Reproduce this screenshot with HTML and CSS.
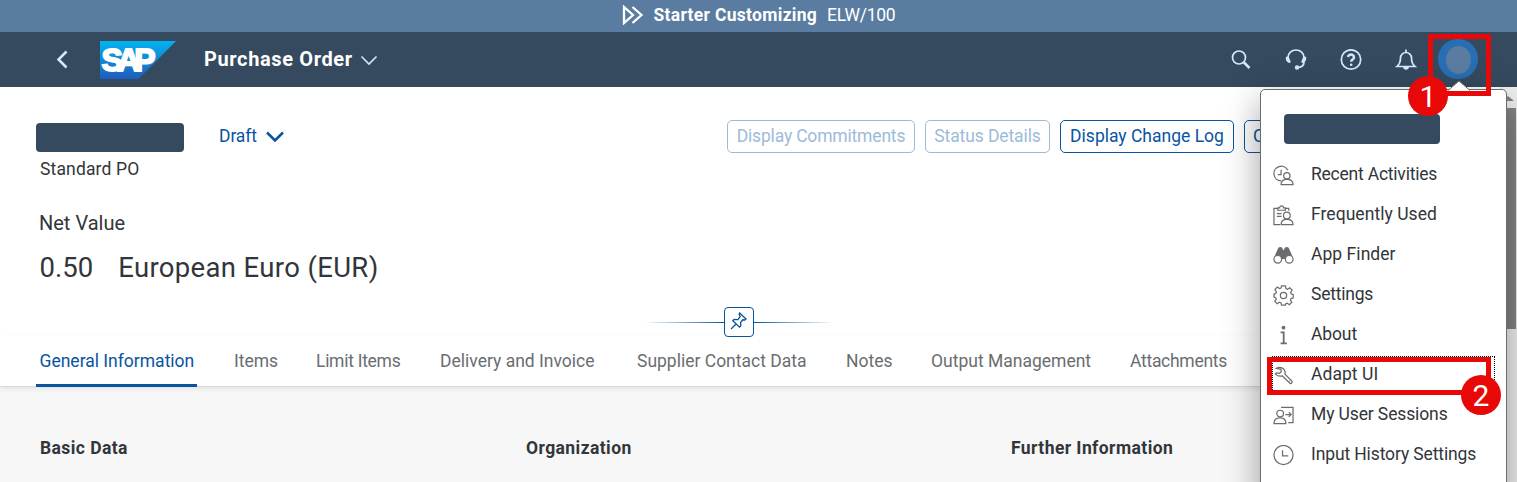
FILE: index.html
```html
<!DOCTYPE html>
<html lang="en">
<head>
<meta charset="utf-8">
<title>Purchase Order</title>
<link rel="stylesheet" href="styles.css">
</head>
<body>
<div class="app">
  <div class="sysbar">
    <svg class="sysbar-icon" width="22" height="20" viewBox="0 0 22 20"><path d="M2 2v16L11 10zM10.500 2l9 8-9 8"/></svg>
    <b class="sysbar-title">Starter Customizing</b>
    <span class="sysbar-client">ELW/100</span>
  </div>

  <header class="shell">
    <svg class="back" width="14" height="20" viewBox="0 0 14 20"><path d="M11.500 1.500L3.500 9.500l8 8"/></svg>
    <svg class="logo" width="76" height="38" viewBox="0 0 76 38">
      <defs><linearGradient id="sap" x1="0" y1="0" x2="0" y2="1"><stop offset="0" stop-color="#00b4f0"/><stop offset=".55" stop-color="#1583d2"/><stop offset="1" stop-color="#1e5dbe"/></linearGradient></defs>
      <path d="M0 0h76L38.500 38H0z" fill="url(#sap)"/>
      <text class="logo-text" x="1.500" y="30" textLength="54" lengthAdjust="spacing">SAP</text>
    </svg>
    <h1 class="shell-title">Purchase Order</h1>
    <svg class="shell-chev" width="18" height="12" viewBox="0 0 18 12"><path d="M1.500 1.500L9 9l7.500-7.500"/></svg>
    <div class="shell-actions">
      <svg width="22" height="22" viewBox="0 0 22 22"><circle cx="9" cy="8.500" r="6.500"/><path class="thick" d="M13.500 13l6 6"/></svg>
      <svg width="22" height="22" viewBox="0 0 22 22"><path d="M3 10V8.500a8 7.500 0 0 1 16 0V10M19 13c0 4-3 5.500-7 5.500"/><path class="fill" d="M.8 8Q2.500 7 4 8.500L5.800 13Q4.500 14.500 3 13.500 .5 12 .8 8zM21.200 8Q19.500 7 18 8.500L16.200 13q1.300 1.500 2.800.5 2.500-1.500 2.200-5.500z"/><circle class="fill" cx="12" cy="18.500" r="2.200"/></svg>
      <svg width="22" height="22" viewBox="0 0 22 22"><circle cx="11" cy="10.500" r="9.700"/><path class="thick" d="M8 8a3 2.600 0 1 1 4.800 2.300Q11.200 11.200 11.200 12.700"/><circle class="fill" cx="11.200" cy="15.700" r="1.300"/></svg>
      <svg width="22" height="22" viewBox="0 0 22 22"><path d="M2 17.500Q5.500 14.500 5.500 9a5.500 5.500 0 0 1 11 0q0 5.500 3.500 8.500zM11 .5v3"/><path class="fill" d="M8 18h6q-.5 2.800-3 2.800T8 18z"/></svg>
      <div class="avatar"><span class="avatar-in"></span></div>
    </div>
  </header>

  <main class="page">
    <section class="head">
      <div class="title-row">
        <div class="title-mask"></div>
        <span class="draft">Draft</span>
        <svg class="draft-chev" width="19" height="12" viewBox="0 0 19 12"><path d="M1 1.500l8 8 8-8"/></svg>
        <div class="btns">
          <button class="btn btn-commit" disabled>Display Commitments</button>
          <button class="btn btn-status" disabled>Status Details</button>
          <button class="btn btn-log">Display Change Log</button>
          <button class="btn btn-copy">Copy</button>
        </div>
      </div>
      <div class="subtitle">Standard PO</div>
      <div class="net-label">Net Value</div>
      <div class="net-value"><span>0.50</span><span class="currency">European Euro (EUR)</span></div>
      <div class="pin-row">
        <i class="pin-line"></i>
        <span class="pin"><svg width="20" height="20" viewBox="0 0 20 20"><path d="M2 17l5.500-5.500M10.700 1l6.300 6-1.200 1-2-.2-2.200 2.700 .2 3.400-1.300 1.200-6.600-6.400 1.200-1.300 3.700 .2L11.200 4.700l-1.100-2.400z"/></svg></span>
        <i class="pin-line right"></i>
      </div>
    </section>
    <nav class="tabs">
      <a class="tab active">General Information</a>
      <a class="tab">Items</a>
      <a class="tab tight">Limit Items</a>
      <a class="tab">Delivery and Invoice</a>
      <a class="tab">Supplier Contact Data</a>
      <a class="tab">Notes</a>
      <a class="tab">Output Management</a>
      <a class="tab tight">Attachments</a>
    </nav>
    <section class="groups">
      <h2>Basic Data</h2>
      <h2>Organization</h2>
      <h2>Further Information</h2>
    </section>
    <div class="scroll"><i class="scroll-up"></i><i class="scroll-thumb"></i></div>
  </main>

  <div class="popover">
    <div class="name-mask"></div>
    <ul class="menu">
      <li><svg viewBox="0 0 22 22"><path d="M8.500 16.700A7.700 7.700 0 1 1 15.500 5.500M8.500 5v5H5"/><circle cx="14.500" cy="11.300" r="3.300"/><path d="M8.500 20.500c0-4 2.500-5.500 6-5.500s6.500 1.500 6.500 5.500z"/></svg><span class="snug">Recent Activities</span></li>
      <li><svg viewBox="0 0 22 22"><path d="M7.500 20.500H1V3.500h4M13 3.500h3.500v2.500M5 5.500V3h2q0-2 2-2t2 2h2v2.500zM4 9h5M4 12h5"/><circle cx="14.500" cy="11" r="3.500"/><path d="M8.500 20.500c0-4 2.500-5.500 6-5.500s6.500 1.500 6.500 5.500z"/></svg><span class="loose">Frequently Used</span></li>
      <li><svg viewBox="0 0 22 22"><path class="fill" d="M6 3.500Q8 2 9.500 4L10 6h2l.5-2q1.500-2 3.500-.5l3.500 8Q15 9 13 14H9Q7 9 2.500 11.500z"/><circle class="lens" cx="5" cy="15" r="4"/><circle class="lens" cx="17" cy="15" r="4"/></svg><span class="loose">App Finder</span></li>
      <li><svg viewBox="0 0 22 22"><circle cx="11" cy="11" r="3.300"/><path d="M9 1h4l.6 2.800 1.600.7 2.400-1.600 2.500 2.500-1.600 2.400.7 1.700 2 .5v3.500l-2.300.7-.7 1.600 1.500 2.300-2.500 2.500-2.400-1.500-1.600.7L13 21H9l-.6-2.200-1.700-.7-2.300 1.500-2.500-2.500 1.500-2.300-.7-1.600L1 12.700V9.500l1.900-.7.7-1.700L2 4.700l2.500-2.500 2.300 1.600 1.600-.7z"/></svg><span class="snug">Settings</span></li>
      <li><svg viewBox="0 0 22 22"><circle class="dot" cx="11" cy="2.800" r="2"/><path class="thick" d="M8 7.800h3.200v11M8 19.300h6.500"/></svg><span>About</span></li>
      <li><svg viewBox="0 0 22 22"><path d="M3.500 3.500Q8 1 11.500 4.500q1.800 2.300 1 5l7.500 7.500q.5 2-2 2.500L10 11.500q-4.500 1-7.500-2l1-1.200 3.200 .5L8.700 7 8.300 4.500z"/><path d="M17 16.800h.8"/></svg><span class="loose">Adapt UI</span></li>
      <li><svg viewBox="0 0 22 22"><circle cx="7.500" cy="9" r="3.500"/><path d="M1 19.500c0-4.500 2.500-6 6.500-6s6 1.500 6 6zM8.500 2.500H21v16h-5M13 10h6M16.500 7.500L19 10l-2.500 2.500"/></svg><span>My User Sessions</span></li>
      <li><svg viewBox="0 0 22 22"><circle cx="11" cy="10.500" r="10"/><path d="M10 5.500v6h6"/></svg><span>Input History Settings</span></li>
    </ul>
  </div>

  <svg class="arrow" width="24" height="11" viewBox="0 0 24 11"><path d="M1 10.500L12 1l11 9.500"/></svg>
  <div class="focus"></div>
  <div class="mark mark-user"></div>
  <div class="mark mark-adapt"></div>
  <span class="step step-1">1</span>
  <span class="step step-2">2</span>
</div>
</body>
</html>
```

FILE: styles.css
```css
* { box-sizing: border-box; }
body { margin: 0; font-family: Roboto, "Liberation Sans", sans-serif; font-size: 17.5px; color: #32363a; }
svg { display: block; flex: none; fill: none; }
h1, h2, ul { margin: 0; padding: 0; list-style: none; }

.app { position: relative; width: 1517px; height: 482px; overflow: hidden; background: #fff; }

.sysbar { height: 32px; padding: 0 0 2px 622px; display: flex; align-items: center; background: #5a7ca0; color: #fff; }
.sysbar-icon { stroke: #fff; stroke-width: 2.300; }
.sysbar-title { margin-left: 9.500px; width: 173.500px; letter-spacing: .3px; white-space: nowrap; }
.sysbar-client { letter-spacing: -.3px; }

.shell { height: 55px; display: flex; align-items: center; padding-left: 55px; background: #354a5f; color: #fff; }
.back { stroke: #d1e8ff; stroke-width: 2.500; }
.logo { margin-left: 31px; }
.logo-text { font: bold 32px "Liberation Sans", Arial, sans-serif; fill: #fff; stroke: #fff; stroke-width: 1.800; }
.shell-title { margin: -2px 0 0 28px; width: 156px; font-size: 20px; font-weight: 700; letter-spacing: .63px; white-space: nowrap; }
.shell-chev { margin-top: 3px; stroke: #d1e8ff; stroke-width: 1.600; }
.shell-actions { display: flex; align-items: center; gap: 33px; margin-left: 852px; }
.shell-actions svg { stroke: #d1e8ff; stroke-width: 1.700; }
.shell-actions .thick { stroke-width: 2.500; }
.shell-actions .fill { fill: #d1e8ff; stroke: none; }
.avatar { width: 40px; height: 40px; margin: -1px 0 0 -12px; display: flex; align-items: center; justify-content: center; border-radius: 50%; background: #286eb4; }
.avatar-in { width: 25px; height: 28px; margin-top: 2px; border-radius: 50%; background: #5a7ca0; }

.page { position: relative; height: 395px; background: #f7f7f7; }
.head { height: 248px; padding-top: 33px; background: #fff; }
.title-row { height: 33px; display: flex; align-items: center; padding-left: 36px; }
.title-mask { width: 148px; height: 29px; margin-top: 2px; border-radius: 4px; background: #354a5f; }
.draft { width: 47px; margin-left: 35px; margin-top: -2px; letter-spacing: -.1px; color: #0854a0; }
.draft-chev { stroke: #0854a0; stroke-width: 2.500; }
.btns { display: flex; gap: 10px; margin-left: 442px; }
.btn { height: 33px; padding: 0 0 2px; border: 1px solid #0854a0; border-radius: 5px; background: #fff; font: 17.5px Roboto, sans-serif; color: #0854a0; white-space: nowrap; }
.btn:disabled { border-color: #9cbbd9; color: #9cbbd9; }
.btn-commit { width: 188px; letter-spacing: -.18px; }
.btn-status { width: 125px; letter-spacing: -.1px; }
.btn-log { width: 174px; }
.btn-copy { width: 64px; padding-left: 8px; text-align: left; }
.subtitle { height: 32px; padding-left: 40px; line-height: 33px; letter-spacing: .15px; }
.net-label { height: 41px; margin-top: 17px; padding-left: 39px; font-size: 20px; line-height: 43px; }
.net-value { height: 50px; padding-left: 39.500px; display: flex; font-size: 27.5px; line-height: 50px; }
.currency { margin-left: 25px; letter-spacing: .35px; }
.pin-row { display: flex; align-items: center; justify-content: center; height: 30px; margin-top: 14px; padding-right: 39px; }
.pin { width: 30px; height: 30px; border: 1px solid #0854a0; border-radius: 4px; padding: 4px; stroke: #0854a0; stroke-width: 1.300; }
.pin-line { width: 80px; height: 1px; background: linear-gradient(to left, #0854a0, transparent); }
.pin-line.right { background: linear-gradient(to right, #0854a0, transparent); }

.tabs { display: grid; grid-template-columns: 161px 42px 84px 157px 169px 45px 159px 100px; column-gap: 40px; height: 52px; padding-left: 36px; background: #fff; box-shadow: inset 0 -1px #d9d9d9, 0 2px 5px rgba(0,0,0,.08); }
.tab { margin-left: -3px; line-height: 52px; color: #6a6d70; white-space: nowrap; }
.tab.active { height: 52px; margin-left: 0; padding-left: 3.500px; background: linear-gradient(#0854a0, #0854a0) 0 100% / 100% 3px no-repeat; color: #0854a0; }
.tab.tight { letter-spacing: -.28px; }

.groups { display: grid; grid-template-columns: 486px 485px auto; padding: 50px 0 0 40px; }
.groups h2 { font-size: 17.5px; line-height: 22px; font-weight: 700; letter-spacing: .42px; }

.scroll { position: absolute; right: 0; top: 0; width: 17px; height: 395px; background: #f1f1f1; }
.scroll-up { display: block; width: 0; height: 0; margin: 9px 0 0 2px; border: 6px solid transparent; border-top: 0; border-bottom: 5px solid #858585; }
.scroll-thumb { display: block; width: 15px; height: 221px; margin: 7px 0 0 1px; background: #858585; }

.popover { position: absolute; left: 1260px; top: 89px; width: 247px; height: 420px; padding-top: 24px; border: 1px solid #6a6d70; border-radius: 5px; background: #fff; box-shadow: 0 12px 36px rgba(0,0,0,.38); }
.name-mask { width: 156px; height: 30px; margin-left: 23px; border-radius: 4px; background: #354a5f; }
.menu { margin-top: 10px; }
.menu li { height: 40px; display: flex; align-items: center; padding-left: 12px; }
.menu svg { width: 21px; height: 21px; margin-top: 2px; stroke: #6a6d70; stroke-width: 1.300; }
.menu .fill { fill: #6a6d70; }
.menu .dot { fill: #6a6d70; stroke: none; }
.menu .lens { fill: #fff; }
.menu .thick { stroke-width: 1.900; }
.menu span { margin: -1px 0 0 17px; letter-spacing: -.12px; white-space: nowrap; }
.menu .snug { letter-spacing: -.22px; }
.menu .loose { letter-spacing: .05px; }

.arrow { position: absolute; left: 1447px; top: 80px; fill: #fff; stroke: #6a6d70; }
.focus { position: absolute; left: 1272px; top: 356px; width: 223px; height: 36px; border: 1px dotted #000; }
.mark { position: absolute; border: 5px solid #e90808; }
.mark-user { left: 1428px; top: 34px; width: 63px; height: 62px; }
.mark-adapt { left: 1267px; top: 357px; width: 224px; height: 38px; }
.step { position: absolute; width: 40px; height: 40px; border-radius: 50%; background: #e90808; color: #fff; font: 30px/42px Roboto, sans-serif; text-align: center; }
.step-1 { left: 1408px; top: 76px; }
.step-2 { left: 1461px; top: 375px; }
```
